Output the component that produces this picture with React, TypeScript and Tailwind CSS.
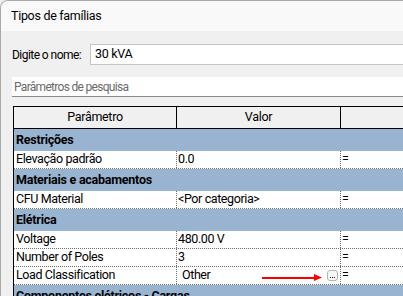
import React from "react";

const font = { fontFamily: 'Roboto, "Noto Sans", "Liberation Sans", sans-serif' };

function Group({ label }: { label: string }) {
  return (
    <div className="h-[22px] bg-[#99b4d1] flex items-center pl-[2px] font-bold text-[12.5px] tracking-[-0.25px] text-black whitespace-nowrap">
      {label}
    </div>
  );
}

function Row({ name, value, extra }: { name: string; value: string; extra?: boolean }) {
  return (
    <div className="h-[18px] flex bg-white border-b border-dotted border-[#6f6f6f] text-[12.5px] tracking-[-0.4px] text-black whitespace-nowrap">
      <div className="w-[163px] shrink-0 border-r border-dotted border-[#6f6f6f] pl-[2px] flex items-center">{name}</div>
      {extra ? (
        <div className="relative w-[164px] shrink-0 border-r border-dotted border-[#6f6f6f] pl-[5px] flex items-center">
          <span>{value}</span>
          <div className="absolute left-[85px] top-[7px] flex items-center">
            <div className="w-[53px] h-[2px] bg-[#ff0000]" />
            <svg width="8" height="7" viewBox="0 0 8 7" className="-ml-[1px]">
              <polygon points="0,0 8,3.5 0,7" fill="#ff0000" />
            </svg>
          </div>
          <div className="ml-auto mr-[2px] w-[11px] h-[11px] rounded-[3px] border border-[#b4b4b4] bg-[#f8f8f8] flex items-end justify-center gap-[1px] pb-[2px]">
            <span className="w-[1px] h-[1px] bg-[#222]" />
            <span className="w-[1px] h-[1px] bg-[#222]" />
            <span className="w-[1px] h-[1px] bg-[#222]" />
          </div>
        </div>
      ) : (
        <div className="w-[164px] shrink-0 border-r border-dotted border-[#6f6f6f] pl-[1px] flex items-center">{value}</div>
      )}
      <div className="flex-1 pl-[1px] flex items-center">=</div>
    </div>
  );
}

export default function App() {
  return (
    <div className="w-[403px] h-[296px] overflow-hidden bg-[#f0f0f0]" style={font}>
      <div className="w-[420px] h-[310px] rounded-tl-[8px] border-l border-t border-[#a9a9a9] flex flex-col overflow-hidden">
        <div className="h-[30px] shrink-0 bg-[#f9f9f9] pl-[10px] flex items-center text-[12.5px] tracking-[-0.3px] text-black whitespace-nowrap">
          Tipos de famílias
        </div>
        <div className="flex-1 bg-[#f0f0f0] pl-[11px]">
          <div className="mt-[13px] h-[21px] flex items-center">
            <div className="w-[78px] shrink-0 text-[12px] tracking-[-0.55px] text-black whitespace-nowrap">Digite o nome:</div>
            <div className="w-[340px] h-[21px] bg-white border border-[#c6c6c6] flex items-center pl-[4px] text-[12.5px] tracking-[-0.3px] text-black">
              30 kVA
            </div>
          </div>
          <div className="mt-[12px] h-[20px] w-[400px] bg-white border-b border-[#8a8a8a] flex items-center pl-[2px] text-[12px] tracking-[-0.7px] text-[#6a6a6a] whitespace-nowrap">
            Parâmetros de pesquisa
          </div>
          <div className="mt-[9px] ml-[1px] w-[420px] border-t border-l border-black">
            <div className="h-[22px] flex bg-[#f0f0f0] border-b border-black text-[12.5px] tracking-[-0.3px] text-black">
              <div className="w-[163px] shrink-0 border-r border-black flex items-center justify-center">Parâmetro</div>
              <div className="w-[164px] shrink-0 border-r border-black flex items-center justify-center">Valor</div>
              <div className="flex-1" />
            </div>
            <Group label="Restrições" />
            <Row name="Elevação padrão" value="0.0" />
            <Group label="Materiais e acabamentos" />
            <Row name="CFU Material" value="<Por categoria>" />
            <Group label="Elétrica" />
            <Row name="Voltage" value="480.00 V" />
            <Row name="Number of Poles" value="3" />
            <Row name="Load Classification" value="Other" extra />
            <Group label="Componentes elétricos - Cargas" />
          </div>
        </div>
      </div>
    </div>
  );
}
